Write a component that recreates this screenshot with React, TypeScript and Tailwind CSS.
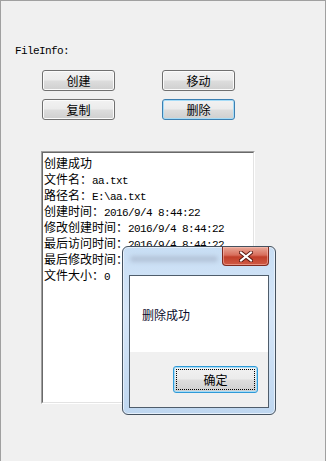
import React from "react";

const CJK = "font-['Noto_Sans_CJK_SC',sans-serif]";
const MONO = "font-['Liberation_Mono','Noto_Sans_CJK_SC',monospace]";

function Mixed({ t }: { t: string }) {
  const parts = t.split(/([\x00-\x7f]+)/).filter((s) => s.length > 0);
  return (
    <>
      {parts.map((s, i) =>
        /^[\x00-\x7f]+$/.test(s) ? (
          <span key={i} className={`${MONO} text-[11px] tracking-[-0.6px] whitespace-pre`}>
            {s}
          </span>
        ) : (
          <span key={i} className={`${CJK} text-[12px]`}>
            {s}
          </span>
        )
      )}
    </>
  );
}

function WinButton({ label, focused }: { label: string; focused?: boolean }) {
  return (
    <div
      className={`w-[73px] h-[21px] rounded-[3px] border ${
        focused ? "border-[#3c7fb1] shadow-[inset_0_0_0_1px_#a6dcf7]" : "border-[#707070] shadow-[inset_0_0_0_1px_#fbfbfb]"
      } bg-[linear-gradient(#f2f2f2_0%,#ebebeb_48%,#dddddd_52%,#cfcfcf_100%)] flex items-center justify-center`}
    >
      <span className={`${CJK} text-[12px] leading-none text-black`}>{label}</span>
    </div>
  );
}

const lines = [
  "创建成功",
  "文件名：aa.txt",
  "路径名：E:\\aa.txt",
  "创建时间：2016/9/4 8:44:22",
  "修改创建时间：2016/9/4 8:44:22",
  "最后访问时间：2016/9/4 8:44:22",
  "最后修改时间：2016/9/4 8:44:22",
  "文件大小：0",
];

export default function App() {
  return (
    <div className="w-[327px] h-[461px] bg-white">
      <div className="relative w-[326px] h-[461px] bg-[#f0f0f0] border-t border-l border-r border-[#a0a0a0] flex flex-col">
        <div className={`${MONO} text-[11px] tracking-[-0.6px] leading-[12px] text-black mt-[44px] ml-[14px]`}>FileInfo:</div>
        <div className="mt-[13px] ml-[41px] grid grid-cols-[73px_73px] gap-x-[47px] gap-y-[8px]">
          <WinButton label="创建" />
          <WinButton label="移动" />
          <WinButton label="复制" />
          <WinButton label="删除" focused />
        </div>
        <div className="mt-[31px] ml-[40px] w-[214px] h-[253px] border-t border-l border-[#a0a0a0] border-r border-b border-r-white border-b-white">
          <div className="w-full h-full bg-white border-t border-l border-[#696969] border-r border-b border-r-[#e3e3e3] border-b-[#e3e3e3] pt-[1px] pl-[1px] text-black leading-[16px]">
            {lines.map((l, i) => (
              <div key={i} className="h-[16px] whitespace-nowrap">
                <Mixed t={l} />
              </div>
            ))}
          </div>
        </div>

        {/* Message box dialog */}
        <div className="absolute left-[121px] top-[245px] w-[154px] h-[169px] rounded-[6px] border border-[#44515e] bg-[linear-gradient(180deg,#c8def4_0%,#d6e6f8_40%,#bfd7f0_100%)] shadow-[inset_0_0_0_1px_#e6f0fb] flex flex-col px-[6px] pb-[6px]">
          <div className="h-[28px] flex items-start">
            <div className="mt-[9px] ml-[1px] w-[88px] h-[6px] rounded-[3px] bg-[#b3c3d8] blur-[2px]" />
            <div className="ml-auto w-[47px] h-[19px] rounded-b-[4px] border border-t-0 border-[#7e2a1f] bg-[linear-gradient(180deg,#e9a999_0%,#d86e5c_45%,#c13f2a_55%,#d05a44_100%)] shadow-[inset_0_0_0_1px_rgba(255,200,190,0.5)] flex items-center justify-center">
              <svg width="14" height="11" viewBox="0 0 14 11">
                <path d="M2 1.5 L12 9.5 M12 1.5 L2 9.5" stroke="#5a1a12" strokeWidth="4" strokeLinecap="square" />
                <path d="M2 1.5 L12 9.5 M12 1.5 L2 9.5" stroke="#ffffff" strokeWidth="2" strokeLinecap="square" />
              </svg>
            </div>
          </div>
          <div className="flex-1 border border-[#4f5d6b] flex flex-col">
            <div className="h-[76px] bg-white pt-[32px] pl-[12px]">
              <div className={`${CJK} text-[12px] leading-[14px] text-[#0a0a2a]`}>删除成功</div>
            </div>
            <div className="flex-1 bg-[#f0f0f0] flex justify-end items-start pt-[14px] pr-[10px]">
              <div className="w-[85px] h-[27px] rounded-[3px] border border-[#2f9ad8] shadow-[inset_0_0_0_1px_#a6dcf7] bg-[linear-gradient(#f2f2f2_0%,#ebebeb_48%,#dddddd_52%,#cfcfcf_100%)] p-[2px]">
                <div className="w-full h-full border border-dotted border-black flex items-center justify-center">
                  <span className={`${CJK} text-[12px] leading-none text-black`}>确定</span>
                </div>
              </div>
            </div>
          </div>
        </div>
      </div>
    </div>
  );
}
